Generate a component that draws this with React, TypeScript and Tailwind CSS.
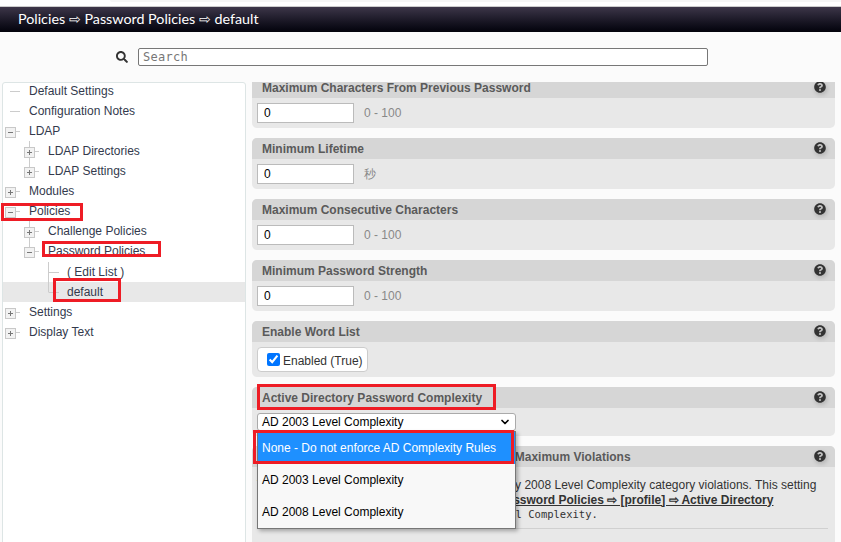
import React from "react";
import { FaQuestionCircle, FaSearch } from "react-icons/fa";
import { ChevronDown } from "lucide-react";

const arial = "font-['Liberation_Sans',Arial,sans-serif]";

type Row = { label: string; level: number; icon?: "plus" | "minus"; up?: boolean; down?: boolean; active?: boolean; gap?: boolean };

const tree: Row[] = [
  { label: "Default Settings", level: 0 },
  { label: "Configuration Notes", level: 0 },
  { label: "LDAP", level: 0, icon: "minus" },
  { label: "LDAP Directories", level: 1, icon: "plus", up: true, down: true },
  { label: "LDAP Settings", level: 1, icon: "plus", up: true },
  { label: "Modules", level: 0, icon: "plus" },
  { label: "Policies", level: 0, icon: "minus" },
  { label: "Challenge Policies", level: 1, icon: "plus", up: true, down: true },
  { label: "Password Policies", level: 1, icon: "minus", up: true },
  { label: "( Edit List )", level: 2, up: true, down: true, gap: true },
  { label: "default", level: 2, up: true, active: true },
  { label: "Settings", level: 0, icon: "plus" },
  { label: "Display Text", level: 0, icon: "plus" },
];

function TreeIcon({ row }: { row: Row }) {
  // connector and expander box, same drawing on all three levels
  return (
    <svg width="26" height="20" viewBox="0 0 26 20" className="shrink-0">
      {row.level === 0 && !row.icon && <path d="M7 10.5H17" stroke="#ccc" />}
      {row.icon && (
        <g>
          {row.up && <path d="M7.5 0V6" stroke="#ccc" />}
          {row.down && <path d="M7.5 15V20" stroke="#ccc" />}
          <path d="M12 10.5H17" stroke="#ccc" />
          <rect x="2.5" y="6.5" width="10" height="10" fill="#f2f2f2" stroke="#c8c8c8" />
          <path d="M5 11.5H10" stroke="#777" />
          {row.icon === "plus" && <path d="M7.5 9V14" stroke="#777" />}
        </g>
      )}
      {row.level === 2 && <path d="M7.5 10.5H18" stroke="#ccc" />}
      {row.level === 2 && <path d={row.down ? "M7.5 0V20" : "M7.5 0V10"} stroke="#ccc" />}
    </svg>
  );
}

function TreeRow({ row }: { row: Row }) {
  const indent = row.level === 0 ? "pl-0" : row.level === 1 ? "pl-[19px]" : "pl-[38px]";
  return (
    <div className={`flex h-5 items-center ${indent} ${row.gap ? "mt-px" : ""} ${row.active ? "bg-[#e8e8e8]" : ""}`}>
      <TreeIcon row={row} />
      <span className="text-[12px] text-[#333a4d]">{row.label}</span>
    </div>
  );
}

function Panel({ title, children, clipped }: { title: React.ReactNode; children: React.ReactNode; clipped?: boolean }) {
  return (
    <section className={`mb-[10px] rounded-[5px] bg-[#e8e8e8] ${clipped ? "-mt-[5px]" : ""}`}>
      <div className="flex h-[21px] items-center justify-between rounded-t-[5px] bg-[#d6d6d6] pl-[10px] pr-[9px]">
        <span className="whitespace-nowrap text-[12px] font-bold text-[#5a5a5a]">{title}</span>
        <FaQuestionCircle className="-mt-[2px] size-[12px] text-[#333] drop-shadow-[1px_2px_2px_rgba(0,0,0,0.2)]" />
      </div>
      {children}
    </section>
  );
}

function NumberBody({ hint }: { hint: string }) {
  return (
    <div className="flex h-[30px] items-center pl-[5px]">
      <input
        readOnly
        value="0"
        className="h-5 w-[97px] border-[1.5px] border-[#bbb] bg-white pl-[6px] text-[12px] text-black outline-none"
      />
      <span className="ml-[10px] text-[12px] text-[#888]">{hint}</span>
    </div>
  );
}

function RedBox({ className }: { className: string }) {
  return <div className={`pointer-events-none absolute border-[3px] border-[#ee1c25] ${className}`} />;
}

export default function App() {
  return (
    <div className={`relative h-[542px] w-[841px] overflow-hidden bg-[#fbfbfb] ${arial}`}>
      {/* Top strip */}
      <div className="h-[6px] bg-white pl-[110px]">
        <div className="h-[2px] rounded-bl-[4px] bg-[#f6f6f6]" />
      </div>
      <header className="flex h-[26px] items-center border-t border-[#ccc] bg-gradient-to-b from-[#3d3649] to-[#04040c] pb-px pl-[18px] font-['Lato',sans-serif] text-[14.3px] text-white">
        Policies ⇨ Password Policies ⇨ default
      </header>

      {/* Search */}
      <div className="flex h-[50px] items-center pl-[116px]">
        <FaSearch className="size-[12px] text-[#333]" />
        <input
          readOnly
          placeholder="Search"
          className="ml-[10px] h-[18px] w-[570px] rounded-[2px] border border-[#777] bg-white pl-[4px] font-['DejaVu_Sans_Mono',monospace] text-[12px] tracking-[0.3px] placeholder:text-[#777] outline-none"
        />
      </div>

      <div className="flex h-[480px] pl-[2px]">
        {/* Navigation tree */}
        <aside className="h-full w-[244px] shrink-0 overflow-hidden rounded-t-[3px] border border-[#dde5e5] bg-white">
          <div className="-mt-[2px]">
            {tree.map((row) => (
              <TreeRow key={row.label} row={row} />
            ))}
          </div>
        </aside>

        {/* Settings */}
        <main className="ml-[6px] h-full w-[583px] overflow-hidden">
          <Panel clipped title="Maximum Characters From Previous Password">
            <NumberBody hint="0 - 100" />
          </Panel>
          <Panel title="Minimum Lifetime">
            <NumberBody hint="秒" />
          </Panel>
          <Panel title="Maximum Consecutive Characters">
            <NumberBody hint="0 - 100" />
          </Panel>
          <Panel title="Minimum Password Strength">
            <NumberBody hint="0 - 100" />
          </Panel>
          <Panel title="Enable Word List">
            <div className="h-[35px] pl-[5px] pt-[5px]">
              <label className="flex h-[25px] w-[111px] items-center rounded-[4px] border border-[#ccc] bg-white pl-[9px] text-[12px] text-[#333]">
                <input type="checkbox" checked readOnly className="size-[13px] accent-[#0075ff]" />
                <span className="ml-[3px] pt-[2px]">Enabled (True)</span>
              </label>
            </div>
          </Panel>
          <Panel title="Active Directory Password Complexity">
            <div className="h-[28px] pl-[5px] pt-[5px]">
              <div className="flex h-[18px] w-[259px] items-center justify-between rounded-[3px] border border-[#aaa] bg-white pl-[4px] pr-[4px] text-[12px] text-black">
                AD 2003 Level Complexity
                <ChevronDown className="size-[12px]" strokeWidth={3.5} />
              </div>
            </div>
          </Panel>
          <Panel title="Active Directory: 2008 Complexity Category Maximum Violations">
            <div className="pb-[30px] pl-[10px] pr-[7px] pt-[11px] text-[12px] leading-[14.5px] text-[#333]">
              <p className="-ml-[5px] whitespace-nowrap">The maximum number of allowed Active Directory 2008 Level Complexity category violations. This setting</p>
              <p className="ml-[13px] whitespace-nowrap">
                applies only if the value of the{" "}
                <b className="underline">Policies ⇨ Password Policies ⇨ [profile] ⇨ Active Directory</b>
              </p>
              <p className="ml-[5px] whitespace-nowrap">
                <b className="underline">Password Complexity</b> is set to{" "}
                <span className="font-['DejaVu_Sans_Mono',monospace] text-[10.5px]">AD 2008 Level Complexity.</span>
              </p>
              <hr className="mt-[6px] border-[#d0d0d0]" />
            </div>
          </Panel>
        </main>
      </div>

      {/* Open select list */}
      <div className="absolute left-[257px] top-[431px] h-[98px] w-[259px] border border-[#777] bg-[#f8f8f8] text-[12px] text-black shadow-[2px_2px_4px_rgba(0,0,0,0.3)]">
        <div className="flex h-[32px] items-center bg-[#1e90ff] pl-[4px] text-white">None - Do not enforce AD Complexity Rules</div>
        <div className="flex h-[32px] items-center pl-[4px]">AD 2003 Level Complexity</div>
        <div className="flex h-[32px] items-center pl-[4px]">AD 2008 Level Complexity</div>
      </div>

      {/* Annotations */}
      <RedBox className="left-[1px] top-[203px] h-[18px] w-[82px]" />
      <RedBox className="left-[42px] top-[241px] h-[16px] w-[119px]" />
      <RedBox className="left-[53px] top-[278px] h-[24px] w-[68px]" />
      <RedBox className="left-[257px] top-[384px] h-[26px] w-[239px]" />
      <RedBox className="left-[253px] top-[430px] h-[34px] w-[261px]" />
    </div>
  );
}
